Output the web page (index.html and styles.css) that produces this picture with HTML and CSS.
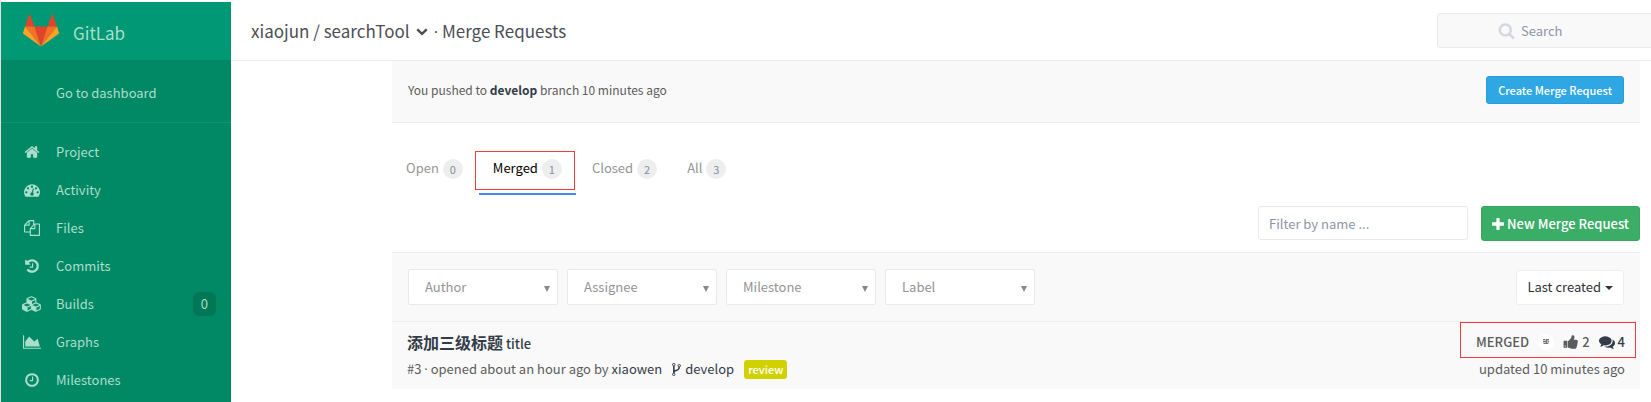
FILE: index.html
```html
<!DOCTYPE html>
<html lang="en">
<head>
<meta charset="utf-8">
<title>Merge Requests · xiaojun / searchTool · GitLab</title>
<link rel="stylesheet" href="styles.css">
</head>
<body>
<div class="page">
  <aside class="sidebar">
    <a class="brand" href="#">
      <svg class="brand-logo" viewBox="0 0 36 33" aria-hidden="true">
        <path fill="#e24329" d="M18 33 11.400 13h13.200zM6.600 0 2 13h9.400zM29.400 0 34 13h-9.400z"/>
        <path fill="#fc6d26" d="M18 33 11.400 13H2zM18 33l6.600-20H34z"/>
        <path fill="#fca326" d="M2 13 .1 19q-.3 1 .5 1.600L18 33zM34 13l1.900 6q.3 1-.5 1.600L18 33z"/>
      </svg>
      <span>GitLab</span>
    </a>
    <a class="dashboard-link" href="#">Go to dashboard</a>
    <nav class="side-nav">
      <a class="side-item" href="#">
        <span class="side-icon"><svg class="icon" viewBox="0 0 1792 1792"><path d="M1472 992v480q0 26-19 45t-45 19h-384v-384h-256v384h-384q-26 0-45-19t-19-45v-480q0-1 .5-3t.5-3l575-474 575 474q1 2 1 6zm223-69l-62 74q-8 9-21 11h-3q-13 0-21-7l-692-577-692 577q-12 8-24 7-13-2-21-11l-62-74q-8-10-7-23.500t11-21.500l719-599q32-26 76-26t76 26l244 204v-195q0-14 9-23t23-9h192q14 0 23 9t9 23v408l219 182q10 8 11 21.500t-7 23.500z"/></svg></span>
        <span>Project</span>
      </a>
      <a class="side-item" href="#">
        <span class="side-icon"><svg class="icon" viewBox="0 0 1792 1792"><path d="M384 1152q0-53-37.500-90.500t-90.500-37.500-90.500 37.500-37.500 90.500 37.500 90.500 90.500 37.500 90.500-37.500 37.500-90.500zm192-448q0-53-37.500-90.500t-90.500-37.500-90.500 37.500-37.500 90.500 37.500 90.500 90.500 37.500 90.500-37.500 37.500-90.500zm428 481l101-382q6-26-7.500-48.500t-38.500-29.500-48 6.500-30 39.500l-101 382q-60 5-107 43.500t-63 98.500q-20 77 20 146t117 89 146-20 89-117q16-60-6-117t-72-91zm660-33q0-53-37.500-90.500t-90.500-37.500-90.500 37.500-37.500 90.500 37.500 90.500 90.500 37.500 90.500-37.500 37.500-90.500zm-640-640q0-53-37.500-90.500t-90.500-37.500-90.500 37.500-37.500 90.500 37.500 90.500 90.500 37.500 90.500-37.500 37.500-90.500zm448 192q0-53-37.500-90.500t-90.500-37.500-90.500 37.500-37.500 90.500 37.500 90.500 90.500 37.500 90.500-37.500 37.500-90.500zm320 448q0 261-141 483-19 29-54 29h-1402q-35 0-54-29-141-221-141-483 0-182 71-348t191-286 286-191 348-71 348 71 286 191 191 286 71 348z"/></svg></span>
        <span>Activity</span>
      </a>
      <a class="side-item" href="#">
        <span class="side-icon"><svg class="icon" viewBox="0 0 1792 1792"><path d="M1696 384q40 0 68 28t28 68v1216q0 40-28 68t-68 28h-960q-40 0-68-28t-28-68v-288h-544q-40 0-68-28t-28-68v-672q0-40 20-88t48-76l408-408q28-28 76-48t88-20h416q40 0 68 28t28 68v328q68-40 128-40h416zm-544 213l-299 299h299v-299zm-640-384l-299 299h299v-299zm196 647l316-316v-416h-384v416q0 40-28 68t-68 28h-416v640h512v-256q0-40 20-88t48-76zm956 804v-1152h-384v416q0 40-28 68t-68 28h-416v640h896z"/></svg></span>
        <span>Files</span>
      </a>
      <a class="side-item" href="#">
        <span class="side-icon"><svg class="icon" viewBox="0 0 1792 1792"><path d="M1664 896q0 156-61 298t-164 245-245 164-298 61q-172 0-327-72.500t-264-204.500q-7-10-6.500-22.500t8.500-20.500l137-138q10-9 25-9 16 2 23 12 73 95 179 147t225 52q104 0 198.500-40.500t163.500-109.500 109.500-163.500 40.500-198.500-40.500-198.500-109.500-163.500-163.500-109.500-198.500-40.500q-98 0-188 35.500t-160 101.500l137 138q31 30 14 69-17 40-59 40h-448q-26 0-45-19t-19-45v-448q0-42 40-59 39-17 69 14l130 129q107-101 244.500-156.500t284.500-55.500q156 0 298 61t245 164 164 245 61 298zm-640-288v448q0 14-9 23t-23 9h-320q-14 0-23-9t-9-23v-64q0-14 9-23t23-9h224v-352q0-14 9-23t23-9h64q14 0 23 9t9 23z"/></svg></span>
        <span>Commits</span>
      </a>
      <a class="side-item" href="#">
        <span class="side-icon"><svg class="icon icon-wide" viewBox="0 0 2304 1792"><path d="M640 1632l384-192v-314l-384 164v342zm-64-454l404-173-404-173-404 173zm1088 454l384-192v-314l-384 164v342zm-64-454l404-173-404-173-404 173zm-448-293l384-165v-266l-384 164v267zm-64-379l441-189-441-189-441 189zm1088 518v416q0 36-19 67t-52 47l-448 224q-25 14-57 14t-57-14l-448-224q-4-2-7-4-2 2-7 4l-448 224q-25 14-57 14t-57-14l-448-224q-33-16-52-47t-19-67v-416q0-38 21.500-70t56.500-48l434-186v-400q0-38 21.500-70t56.500-48l448-192q23-10 50-10t50 10l448 192q35 16 56.500 48t21.500 70v400l434 186q36 16 57 48t21 70z"/></svg></span>
        <span>Builds</span>
        <span class="side-count">0</span>
      </a>
      <a class="side-item" href="#">
        <span class="side-icon"><svg class="icon icon-chart" viewBox="0 0 2048 1792"><path d="M2048 1536v128h-2048v-1536h128v1408h1920zm-384-1024l256 896h-1664v-576l448-576 576 576z"/></svg></span>
        <span>Graphs</span>
      </a>
      <a class="side-item" href="#">
        <span class="side-icon"><svg class="icon" viewBox="0 0 1792 1792"><path d="M1024 544v448q0 14-9 23t-23 9h-320q-14 0-23-9t-9-23v-64q0-14 9-23t23-9h224v-352q0-14 9-23t23-9h64q14 0 23 9t9 23zm416 352q0-148-73-273t-198-198-273-73-273 73-198 198-73 273 73 273 198 198 273 73 273-73 198-198 73-273zm224 0q0 209-103 385.500t-279.500 279.500-385.500 103-385.500-103-279.500-279.500-103-385.500 103-385.500 279.500-279.500 385.500-103 385.500 103 279.500 279.500 103 385.500z"/></svg></span>
        <span>Milestones</span>
      </a>
    </nav>
  </aside>

  <div class="main">
    <header class="top-bar">
      <h1 class="top-title">
        <a href="#">xiaojun / searchTool</a>
        <svg class="title-chevron" viewBox="0 0 1792 1792" aria-hidden="true"><path d="M1683 808l-742 741q-19 19-45 19t-45-19l-742-741q-19-19-19-45.500t19-45.500l166-165q19-19 45-19t45 19l531 531 531-531q19-19 45-19t45 19l166 165q19 19 19 45.500t-19 45.500z"/></svg>
        <span><span class="dot">·</span> Merge Requests</span>
      </h1>
      <label class="search">
        <svg class="search-icon" viewBox="0 0 1792 1792" aria-hidden="true"><path d="M1216 832q0-185-131.500-316.500t-316.500-131.500-316.500 131.500-131.500 316.500 131.500 316.500 316.500 131.500 316.500-131.500 131.500-316.500zm512 832q0 52-38 90t-90 38q-54 0-90-38l-343-342q-179 124-399 124-143 0-273.500-55.500t-225-150-150-225-55.500-273.500 55.500-273.500 150-225 225-150 273.500-55.500 273.500 55.500 225 150 150 225 55.500 273.500q0 220-124 399l343 343q37 37 37 90z"/></svg>
        <input class="search-input" type="text" placeholder="Search" aria-label="Search">
      </label>
    </header>

    <main class="content">
      <section class="push-event">
        <p class="push-text">You pushed to <a href="#">develop</a> branch 10 minutes ago</p>
        <button class="btn btn-create" type="button">Create Merge Request</button>
      </section>

      <nav class="tabs">
        <a class="tab" href="#">Open <span class="tab-count">0</span></a>
        <a class="tab tab-active marked marked-tab" href="#">Merged <span class="tab-count">1</span></a>
        <a class="tab" href="#">Closed <span class="tab-count">2</span></a>
        <a class="tab" href="#">All <span class="tab-count">3</span></a>
      </nav>

      <div class="toolbar">
        <input class="name-filter" type="text" placeholder="Filter by name ..." aria-label="Filter by name">
        <button class="btn btn-new" type="button">
          <svg class="plus" viewBox="192 128 1408 1408" aria-hidden="true"><path d="M1600 736v192q0 40-28 68t-68 28h-416v416q0 40-28 68t-68 28h-192q-40 0-68-28t-28-68v-416h-416q-40 0-68-28t-28-68v-192q0-40 28-68t68-28h416v-416q0-40 28-68t68-28h192q40 0 68 28t28 68v416h416q40 0 68 28t28 68z"/></svg>
          <span>New Merge Request</span>
        </button>
      </div>

      <section class="filters">
        <span class="select"><select aria-label="Author"><option>Author</option></select></span>
        <span class="select"><select aria-label="Assignee"><option>Assignee</option></select></span>
        <span class="select"><select aria-label="Milestone"><option>Milestone</option></select></span>
        <span class="select"><select aria-label="Label"><option>Label</option></select></span>
        <button class="sort" type="button"><span>Last created</span><span class="caret"></span></button>
      </section>

      <article class="request">
        <div class="request-main">
          <h2 class="request-title"><a href="#"><b>添加三级标题</b> title</a></h2>
          <p class="request-meta">
            <span>#3 <span class="dot">·</span> opened about an hour ago by <a href="#">xiaowen</a></span>
            <a class="branch" href="#"><svg class="fork" viewBox="384 0 1024 1792" aria-hidden="true"><path d="M672 1472q0-40-28-68t-68-28-68 28-28 68 28 68 68 28 68-28 28-68zm0-1152q0-40-28-68t-68-28-68 28-28 68 28 68 68 28 68-28 28-68zm640 128q0-40-28-68t-68-28-68 28-28 68 28 68 68 28 68-28 28-68zm96 0q0 52-26 96.500t-70 69.500q-2 287-226 414-67 38-203 81-128 40-169.500 71t-41.500 100v26q44 25 70 69.500t26 96.500q0 80-56 136t-136 56-136-56-56-136q0-52 26-96.500t70-69.500v-820q-44-25-70-69.500t-26-96.500q0-80 56-136t136-56 136 56 56 136q0 52-26 96.500t-70 69.500v497q54-26 154-57 55-17 87.500-29.500t70.500-31 59-39.500 40.500-51 28-69.500 8.500-91.500q-44-25-70-69.500t-26-96.500q0-80 56-136t136-56 136 56 56 136z"/></svg><span>develop</span></a>
            <a class="label" href="#">review</a>
          </p>
        </div>
        <div class="request-side">
          <div class="request-stats marked marked-stats">
            <span class="state">MERGED</span>
            <span class="avatar"><svg viewBox="0 0 16 16" aria-hidden="true"><path fill="#c4c4c4" d="M5 5h6v5H5z"/><path stroke="#777" d="M5 5.500h2m1 0h3M5 7.500h4m1 0h1M6 9.500h4M8.500 6v4"/></svg></span>
            <span class="stat stat-votes"><svg class="icon" viewBox="0 0 1792 1792" aria-hidden="true"><path d="M320 1344q0-26-19-45t-45-19q-27 0-45.500 19t-18.500 45q0 27 18.500 45.500t45.500 18.500q26 0 45-18.500t19-45.500zm160-512v640q0 26-19 45t-45 19h-288q-26 0-45-19t-19-45v-640q0-26 19-45t45-19h288q26 0 45 19t19 45zm1184 0q0 86-55 149 15 44 15 76 3 76-43 137 17 56 0 117-15 57-54 94 9 112-49 181-64 76-197 78h-129q-66 0-144-15.500t-121.500-29-120.500-39.500q-123-43-158-44-26-1-45-19.500t-19-44.500v-641q0-25 18-43.500t43-20.500q24-2 76-59t101-121q68-87 101-120 18-18 31-48t17.500-48.500 13.500-60.500q7-39 12.500-61t19.500-52 34-50q19-19 45-19 46 0 82.500 10.500t60 26 40 40.500 24 45 12 50 5 45 .5 39q0 38-9.500 76t-19 60-27.500 56q-3 6-10 18t-11 22-8 24h277q78 0 135 57t57 135z"/></svg><span>2</span></span>
            <a class="stat" href="#"><svg class="icon" viewBox="0 0 1792 1792" aria-hidden="true"><path d="M1408 768q0 139-94 257t-256.500 186.500-353.500 68.500q-86 0-176-16-124 88-278 128-36 9-86 16h-3q-11 0-20.500-8t-11.500-21q-1-3-1-6.500t.5-6.500 2-6l2.500-5 3.500-5.500 4-5 4.500-5 4-4.500q5-6 23-25t26-29.500 22.500-29 25-38.500 20.500-44q-124-72-195-177t-71-224q0-139 94-257t256.500-186.500 353.500-68.500 353.500 68.500 256.500 186.500 94 257zm384 256q0 120-71 224.500t-195 176.500q10 24 20.500 44t25 38.500 22.500 29 26 29.500 23 25q1 1 4 4.500t4.500 5 4 5 3.500 5.500l2.500 5 2 6 .5 6.500-1 6.500q-3 14-13 22t-22 7q-50-7-86-16-154-40-278-128-90 16-176 16-271 0-472-132 58 4 88 4 161 0 309-45t264-129q125-92 192-212t67-254q0-77-23-152 129 71 204 178t75 230z"/></svg><span>4</span></a>
          </div>
          <p class="updated">updated 10 minutes ago</p>
        </div>
      </article>
    </main>
  </div>
</div>
</body>
</html>
```
FILE: styles.css
```css
* {
  box-sizing: border-box;
}

body {
  margin: 0;
  background: #fff;
  color: #5c5c5c;
  font: 13px/20px "Noto Sans CJK SC", sans-serif;
}

a {
  color: #333c48;
  text-decoration: none;
}

h1,
h2,
p {
  margin: 0;
  font-weight: 400;
}

button,
input,
select {
  font: inherit;
}

svg {
  display: block;
  fill: currentColor;
}

/* The CJK face draws the middle dot full width */
.dot {
  font-family: "Open Sans", sans-serif;
  line-height: 1;
}

.page {
  display: flex;
  min-height: 100vh;
  padding-top: 2px;
  border-left: 1px solid #e1e1e1;
}

/* Sidebar */

.sidebar {
  flex: none;
  width: 230px;
  background: #018865;
}

.sidebar a {
  color: #a9dfcb;
}

.brand {
  display: flex;
  align-items: center;
  gap: 14px;
  height: 58px;
  padding: 4px 22px 0;
  background: #019875;
  font-size: 17px;
}

.brand-logo {
  width: 36px;
  height: 34px;
  margin-bottom: 6px;
}

.dashboard-link {
  display: flex;
  align-items: center;
  height: 63px;
  padding: 3px 55px 0;
  border-bottom: 1px solid #019875;
}

.side-nav {
  padding-top: 10px;
}

.side-item {
  display: flex;
  align-items: center;
  height: 38px;
  padding: 0 15px 0 16px;
}

.side-icon {
  display: flex;
  justify-content: center;
  width: 30px;
  margin-right: 9px;
}

.icon {
  width: 16px;
  height: 16px;
}

.icon-wide {
  width: 20px;
}

.icon-chart {
  width: 18px;
}

.side-count {
  margin-left: auto;
  padding: 2px 8px;
  border-radius: 6px;
  background: #017855;
}

/* Top bar */

.main {
  flex: 1;
  min-width: 0;
}

.top-bar {
  display: flex;
  align-items: center;
  justify-content: space-between;
  height: 59px;
  padding-left: 20px;
  border-bottom: 1px solid #ececec;
}

.top-title {
  display: flex;
  align-items: center;
  gap: 6px;
  color: #4c4e54;
  font-size: 17px;
}

.top-title a {
  color: inherit;
}

.title-chevron {
  width: 12px;
  height: 12px;
}

.search {
  display: flex;
  align-items: center;
  gap: 6px;
  width: 214px;
  height: 35px;
  margin-bottom: 1px;
  padding-left: 60px;
  border: 1px solid #e7e9ed;
  border-right: 0;
  border-radius: 4px 0 0 4px;
  background: #f9f9f9;
}

.search-icon {
  width: 17px;
  height: 17px;
  color: #d2d7e0;
}

.search-input {
  flex: 1;
  min-width: 0;
  padding: 0;
  border: 0;
  background: none;
}

input::placeholder {
  color: #8b95a5;
  opacity: 1;
}

/* Content */

.content {
  margin: 0 11px 0 161px;
}

.push-event {
  display: flex;
  align-items: center;
  justify-content: space-between;
  height: 62px;
  padding: 0 16px 4px;
  border-bottom: 1px solid #eee;
  background: #f9f9f9;
  font-size: 12px;
}

.push-text a {
  font-weight: 700;
}

.btn {
  display: flex;
  align-items: center;
  justify-content: center;
  border-radius: 3px;
  color: #fff;
  font-weight: 500;
}

.btn-create {
  height: 28px;
  padding: 0 11px;
  border: 1px solid #2a9bd6;
  background: #2fa7e4;
  font-size: 11px;
}

.tabs {
  display: flex;
  gap: 2px;
  padding-top: 20px;
}

.tab {
  display: flex;
  gap: 4px;
  height: 52px;
  padding: 15px 14px 0;
  border-bottom: 2px solid transparent;
  color: #959494;
}

.tab-active {
  border-bottom-color: #4688f1;
  color: #000;
}

.tab-count {
  width: 20px;
  height: 20px;
  margin-top: 1px;
  border-radius: 10px;
  background: #eee;
  color: #7f8fa4;
  font-size: 11px;
  text-align: center;
}

/* Highlight frames drawn over the page */

.marked {
  position: relative;
}

.marked::before {
  content: "";
  position: absolute;
  border: 1px solid #f03c3c;
  pointer-events: none;
}

.marked-tab::before {
  inset: 8px 1px 3px -4px;
}

.marked-stats::before {
  inset: -10px -11px -6px -16px;
}

.toolbar {
  display: flex;
  justify-content: flex-end;
  gap: 13px;
  padding: 11px 0;
}

.name-filter {
  width: 210px;
  height: 34px;
  padding: 0 10px;
  border: 1px solid #e7e9ed;
  border-radius: 3px;
  background: #fff;
}

.btn-new {
  gap: 3px;
  height: 35px;
  padding: 0 10px;
  border: 1px solid #38a561;
  background: #3aae67;
}

.plus {
  width: 12px;
  height: 12px;
}

.filters {
  display: flex;
  align-items: center;
  gap: 9px;
  height: 70px;
  padding: 0 16px;
  border: solid #eee;
  border-width: 1px 0;
  background: #f9f9f9;
}

.select {
  position: relative;
  width: 150px;
}

.select select {
  width: 100%;
  height: 36px;
  padding: 0 16px;
  border: 1px solid #e7e9ed;
  border-radius: 2px;
  appearance: none;
  background: #fff;
  color: #959494;
}

.select::after {
  content: "";
  position: absolute;
  right: 8px;
  top: 17px;
  border: solid transparent;
  border-width: 6px 3px 0;
  border-top-color: #888;
  pointer-events: none;
}

.sort {
  display: flex;
  align-items: center;
  gap: 4px;
  height: 35px;
  margin-left: auto;
  padding: 0 10px;
  border: 1px solid #eee;
  border-radius: 3px;
  background: #fff;
  color: #313236;
}

.caret {
  margin-top: 2px;
  border: solid transparent;
  border-width: 4px 4px 0;
  border-top-color: #313236;
}

/* Merge request row */

.request {
  display: flex;
  justify-content: space-between;
  padding: 10px 15px;
  background: #f9f9f9;
}

.request-title {
  height: 20px;
  margin-bottom: 7px;
  font-size: 13px;
  font-weight: 500;
}

.request-title b {
  font-size: 16px;
}

.request-meta {
  display: flex;
  align-items: center;
  gap: 10px;
  height: 20px;
}

.branch {
  display: flex;
  align-items: center;
  gap: 4px;
}

.fork {
  width: 9px;
  height: 15px;
}

.label {
  padding: 0 4px;
  border-radius: 3px;
  background: #d1d100;
  color: #fff;
  font-size: 11px;
  font-weight: 500;
  line-height: 19px;
}

.request-side {
  display: flex;
  flex-direction: column;
  align-items: flex-end;
  gap: 7px;
}

.request-stats {
  display: flex;
  align-items: center;
  gap: 9px;
  height: 20px;
  font-weight: 500;
}

.avatar {
  width: 16px;
  height: 16px;
  border-radius: 8px;
  background: #fff;
}

.avatar svg {
  width: 16px;
  height: 16px;
}

.stat {
  display: flex;
  align-items: center;
  gap: 3px;
}

.updated {
  line-height: 20px;
}
```
